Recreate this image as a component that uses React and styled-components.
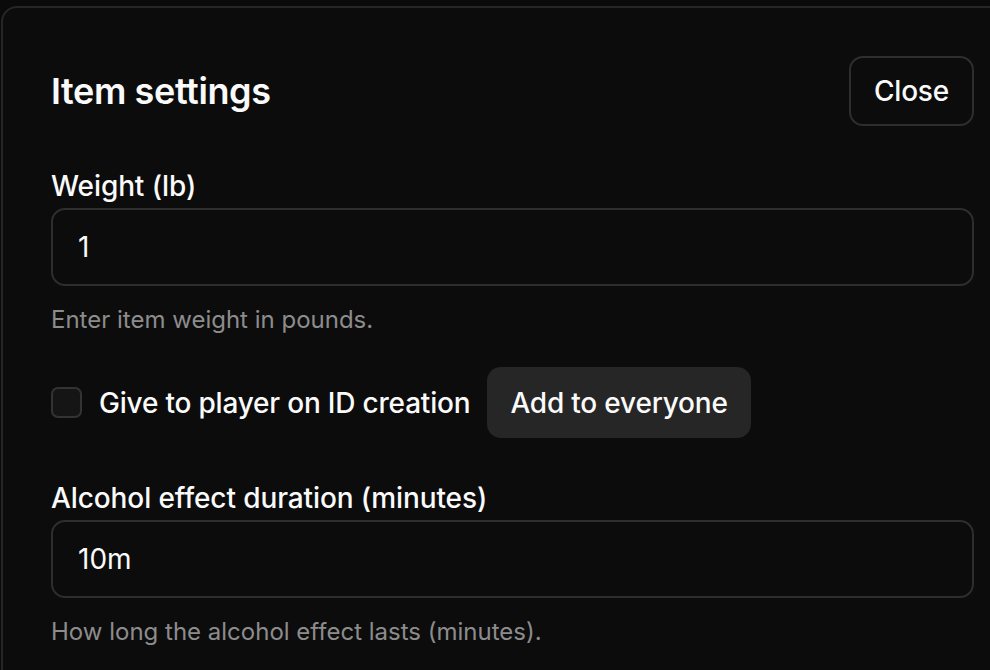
import React from "react";
import styled, { createGlobalStyle } from "styled-components";

const GlobalStyle = createGlobalStyle`
  html, body {
    margin: 0;
    padding: 0;
    background: #0a0a0a;
    overflow: hidden;
  }
  body {
    font-family: Inter, "Noto Sans", "Liberation Sans", sans-serif;
    color: #fafafa;
    -webkit-font-smoothing: antialiased;
  }
`;

const Page = styled.div`
  width: 990px;
  height: 670px;
  padding: 6px 0 0 1px;
  box-sizing: border-box;
  overflow: hidden;
`;

const Panel = styled.section`
  width: 1023px;
  min-height: 700px;
  box-sizing: border-box;
  background: #0c0c0c;
  border: 2px solid #262626;
  border-radius: 16px;
  padding: 48px 48px;
`;

const Header = styled.div`
  display: flex;
  align-items: center;
  justify-content: space-between;
  height: 70px;
  margin-bottom: 46px;
`;

const Title = styled.h2`
  margin: 0;
  font-size: 36px;
  line-height: 40px;
  font-weight: 600;
  letter-spacing: -0.4px;
`;

const OutlineButton = styled.button`
  height: 70px;
  padding: 0 23px;
  background: transparent;
  border: 2px solid #2e2e2e;
  border-radius: 14px;
  color: #fafafa;
  font-family: inherit;
  font-size: 28px;
  font-weight: 500;
  letter-spacing: -0.2px;
`;

const Field = styled.div`
  display: flex;
  flex-direction: column;
`;

const Label = styled.label`
  font-size: 28px;
  line-height: 28px;
  font-weight: 500;
  letter-spacing: -0.1px;
  margin-bottom: 8px;
`;

const Input = styled.input`
  height: 78px;
  box-sizing: border-box;
  background: transparent;
  border: 2px solid #2e2e2e;
  border-radius: 14px;
  padding: 0 25px;
  color: #fafafa;
  font-family: inherit;
  font-size: 28px;
  outline: none;
`;

const Helper = styled.p`
  margin: 18px 0 0;
  font-size: 24px;
  line-height: 32px;
  color: #8c8c8c;
`;

const CheckRow = styled.div`
  display: flex;
  align-items: center;
  margin: ${(p) => p.$top}px 0 46px;
`;

const Box = styled.span`
  width: 31px;
  height: 31px;
  box-sizing: border-box;
  border: 2px solid #333;
  background: #151515;
  border-radius: 7px;
  margin-right: 17px;
`;

const CheckText = styled.span`
  font-size: 28px;
  font-weight: 500;
  letter-spacing: -0.2px;
  margin-right: 17px;
`;

const SecondaryButton = styled.button`
  height: 71px;
  padding: 0 23px;
  background: #262626;
  border: none;
  border-radius: 14px;
  color: #fafafa;
  font-family: inherit;
  font-size: 28px;
  font-weight: 500;
  letter-spacing: -0.2px;
`;

export default function App() {
  return (
    <>
      <GlobalStyle />
      <Page>
        <Panel>
          <Header>
            <Title>Item settings</Title>
            <OutlineButton>Close</OutlineButton>
          </Header>
          <Field>
            <Label>Weight (lb)</Label>
            <Input defaultValue="1" />
            <Helper>Enter item weight in pounds.</Helper>
          </Field>
          <CheckRow $top={31}>
            <Box />
            <CheckText>Give to player on ID creation</CheckText>
            <SecondaryButton>Add to everyone</SecondaryButton>
          </CheckRow>
          <Field>
            <Label>Alcohol effect duration (minutes)</Label>
            <Input defaultValue="10m" />
            <Helper>How long the alcohol effect lasts (minutes).</Helper>
          </Field>
        </Panel>
      </Page>
    </>
  );
}
